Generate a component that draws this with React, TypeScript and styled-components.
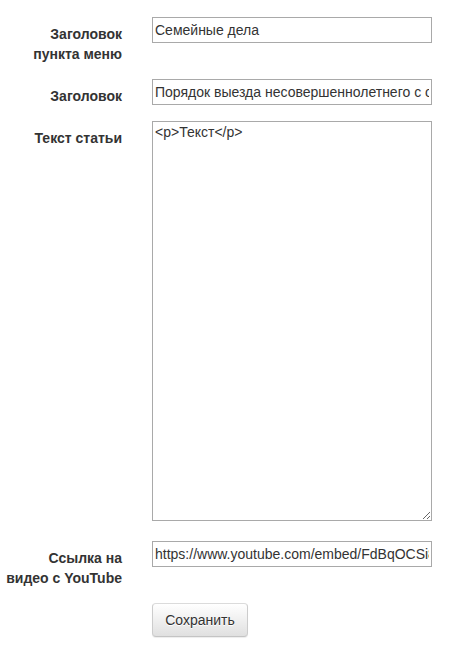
import React from "react";
import styled, { createGlobalStyle } from "styled-components";

const GlobalStyle = createGlobalStyle`
  html, body { margin: 0; padding: 0; background: #fff; }
  body {
    font-family: "Liberation Sans", Arial, Helvetica, sans-serif;
    font-size: 14px;
    line-height: 20px;
    color: #333;
  }
`;

const Form = styled.form`
  display: flex;
  flex-direction: column;
  padding-top: 17px;
  width: 456px;
`;

const Row = styled.div<{ $after?: number }>`
  display: grid;
  grid-template-columns: 122px 280px;
  column-gap: 30px;
  align-items: start;
  margin-bottom: ${(p) => (p.$after ?? 15)}px;
`;

const Label = styled.label`
  padding-top: 7px;
  font-weight: bold;
  font-size: 14px;
  line-height: 20px;
  text-align: right;
  color: #333;
  white-space: nowrap;
`;

const TextInput = styled.input`
  box-sizing: border-box;
  display: block;
  width: 280px;
  height: 26px;
  margin: 0;
  padding: 0 2px;
  border: 1px solid #a9a9a9;
  border-radius: 0;
  background: #fff;
  font-family: "Liberation Sans", Arial, sans-serif;
  font-size: 14px;
  color: #333;
  outline: none;
`;

const TextArea = styled.textarea`
  box-sizing: border-box;
  display: block;
  width: 280px;
  height: 400px;
  margin: 0;
  padding: 2px;
  border: 1px solid #a9a9a9;
  border-radius: 0;
  background: #fff;
  font-family: "Liberation Sans", Arial, sans-serif;
  font-size: 14px;
  line-height: 16px;
  color: #333;
  outline: none;
  resize: both;
`;

const Button = styled.button`
  box-sizing: border-box;
  width: 96px;
  height: 34px;
  padding: 6px 12px;
  border: 1px solid #ccc;
  border-color: #dbdbdb #ccc #c4c4c4;
  border-radius: 4px;
  background: linear-gradient(to bottom, #ffffff 0%, #e0e0e0 100%);
  box-shadow: inset 0 1px 0 rgba(255, 255, 255, 0.15), 0 1px 1px rgba(0, 0, 0, 0.075);
  text-shadow: 0 1px 0 #fff;
  font-family: "Liberation Sans", Arial, sans-serif;
  font-size: 14px;
  line-height: 20px;
  color: #333;
  cursor: pointer;
`;

const Spacer = styled.div``;

export default function App() {
  return (
    <>
      <GlobalStyle />
      <Form onSubmit={(e) => e.preventDefault()}>
        <Row>
          <Label>
            Заголовок
            <br />
            пункта меню
          </Label>
          <TextInput defaultValue="Семейные дела" />
        </Row>
        <Row>
          <Label>Заголовок</Label>
          <TextInput defaultValue="Порядок выезда несовершеннолетнего с одним из родителей" />
        </Row>
        <Row $after={20}>
          <Label>Текст статьи</Label>
          <TextArea defaultValue="<p>Текст</p>" />
        </Row>
        <Row>
          <Label>
            Ссылка на
            <br />
            видео с YouTube
          </Label>
          <TextInput defaultValue="https://www.youtube.com/embed/FdBqOCSi8Hg" />
        </Row>
        <Row>
          <Spacer />
          <Button type="submit">Сохранить</Button>
        </Row>
      </Form>
    </>
  );
}
